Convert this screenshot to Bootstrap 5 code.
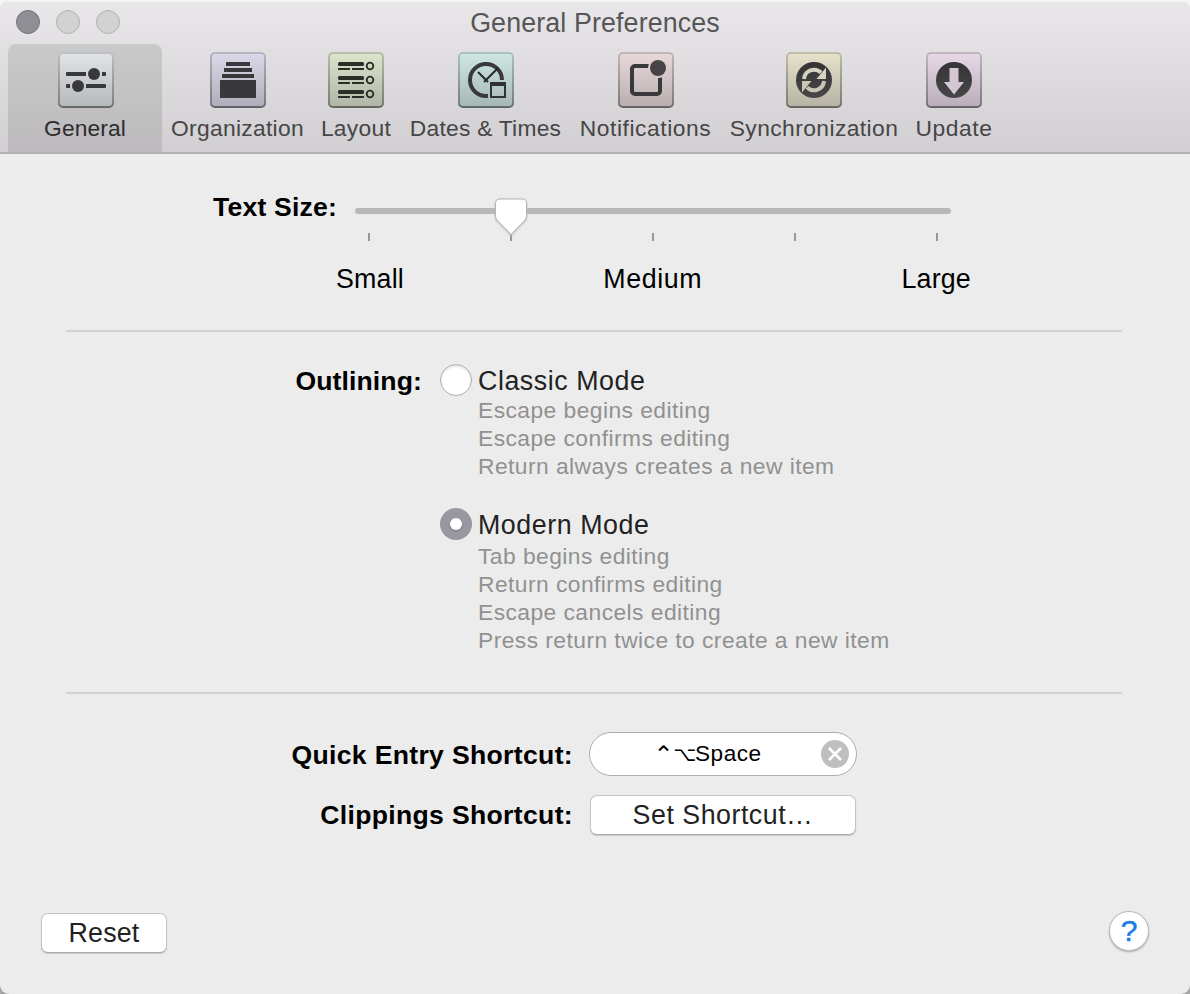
<!DOCTYPE html>
<html lang="en">
<head>
<meta charset="utf-8">
<meta name="viewport" content="width=device-width, initial-scale=1">
<title>General Preferences</title>
<link href="https://cdn.jsdelivr.net/npm/bootstrap@5.3.0/dist/css/bootstrap.min.css" rel="stylesheet">
<style>
html{background:linear-gradient(#f6f6f6 50%,#a5a5a5 50%);height:100%}
body{background:transparent;font-family:"Liberation Sans",Arial,sans-serif;font-size:26.8px;line-height:30px;color:#000;height:994px;overflow:hidden}
.window{height:994px;background:#ececec;border-radius:9px;overflow:hidden}
.titlebar{height:154px;background:linear-gradient(#e9e7e9,#d1cfd1);border-bottom:2px solid #b3b1b3;box-shadow:inset 0 2px 0 #f4f3f4}
.titlerow{height:44px}
.lights{left:16px;top:10px;gap:16px}
.light{width:24px;height:24px;border-radius:50%;background:#d3d2d3;border:1px solid #b5b4b5}
.light.shut{background:#8f8e95;border-color:#737279}
.title-text{color:#565557;letter-spacing:.13px}
.tools{height:108px;padding-left:8px}
.tool{height:108px;padding:8px 0 0;color:#464547;font-size:22.8px;line-height:26px;border:0;background:none}
.tool svg{display:block;margin-bottom:7px}
.tool.active{background:linear-gradient(#cac9ca,#bcbabc);color:#2d2c2f;border-radius:8px 8px 0 0}
.tool.active svg{margin-left:2px}
.w1{width:154px;letter-spacing:.1px}.w2{width:151px;letter-spacing:.3px}.w3{width:86px;letter-spacing:.3px}.w4{width:173px;letter-spacing:.25px}.w5{width:147px;letter-spacing:.55px}.w6{width:190px;letter-spacing:.43px}.w7{width:90px;letter-spacing:.55px}
.ink{fill:#39383b}.inkline{stroke:#39383b;fill:none}
.size-row{height:176px;padding-top:38px}
.lbl{font-weight:700;text-align:right;font-size:26.6px}
.lbl-size{width:337px;letter-spacing:.18px}
.lbl-out{width:422px;letter-spacing:.1px;padding-top:2px}
.lbl-short{width:573px;letter-spacing:.32px;padding-top:2px}
.clip-row .lbl-short{padding-top:0}
.slider{width:596px;margin-left:18px;padding-top:16px}
.track{height:6px;border-radius:3px;background:#b8b8b8}
.knob{left:139px;top:5px;overflow:visible;filter:drop-shadow(0 1px 1px #bbb)}
.ticks{padding:0 13px;margin-top:19px}
.tick{width:2px;height:8px;background:#999}
.size-names{margin:23px -20px 0 -19px;letter-spacing:.2px}
.size-names .mid{letter-spacing:.6px}
.rule{height:2px;margin:0 68px 0 66px;background:#d2d2d2}
.modes{height:360px;padding-top:32px}
.mode-list{margin-left:18px}
.mode-name{color:#222;letter-spacing:.55px;height:32px;line-height:34px;gap:6px}
.second{margin-top:28px;margin-bottom:2px}
.dot{width:32px;height:32px;flex:none;border-radius:50%;background:#fff;border:1px solid #adadad;box-shadow:inset 0 2px 2px #e6e6e6}
.dot.on{background:#9998a0;border:0;box-shadow:none;display:flex;align-items:center;justify-content:center}
.dot.on::after{content:"";width:12px;height:12px;border-radius:50%;background:#fff;box-shadow:0 1px 2px #77767c}
.mode-note{margin-left:38px;color:#919191;font-size:22.8px;line-height:28px;letter-spacing:.45px}
.shortcuts{padding-top:38px}
.recorder{width:268px;height:44px;border:1px solid #adadad;border-radius:22px;background:#fff;margin-left:16px;font-size:22.6px;padding:0 6px 0 63px;letter-spacing:.5px;line-height:42px}
.key{font-family:"DejaVu Sans",sans-serif;letter-spacing:0;display:flex;justify-content:center}
.ctrl{width:21px;font-size:24px;padding-top:2px}
.opt{width:21px;font-size:20px}
.mac-btn{background:#fff;border:1px solid #c4c4c4;border-bottom-color:#adadad;border-radius:7px;box-shadow:0 1px 1px #c6c6c6;color:#222;font-size:26.8px;line-height:36px;padding:1px 0;height:40px}
.clip-row{margin-top:19px}
.set{width:266px;margin-left:17px;letter-spacing:.5px}
.reset{width:126px;letter-spacing:.2px;margin-top:2px}
.foot{padding:76px 41px 0}
.help{width:40px;height:40px;border-radius:50%;background:#fff;border:1px solid #bbb;box-shadow:0 1px 2px #aaa;color:#1a7bea;font-size:30px;line-height:38px;padding:0;-webkit-text-stroke:.5px #1a7bea}
</style>
<script src="https://cdn.jsdelivr.net/npm/bootstrap@5.3.0/dist/js/bootstrap.bundle.min.js"></script>
</head>
<body>
<svg width="0" height="0" class="position-absolute">
<defs>
<linearGradient id="edge" gradientUnits="userSpaceOnUse" x1="0" y1="0" x2="0" y2="56"><stop stop-color="#000" stop-opacity=".16"/><stop offset=".9" stop-color="#000" stop-opacity=".3"/><stop offset="1" stop-color="#000" stop-opacity=".46"/></linearGradient>
<linearGradient id="g1" x2="0" y2="1"><stop stop-color="#e2e6e8"/><stop offset="1" stop-color="#b4b7b8"/></linearGradient>
<linearGradient id="g2" x2="0" y2="1"><stop stop-color="#dcd9ea"/><stop offset="1" stop-color="#aeacb9"/></linearGradient>
<linearGradient id="g3" x2="0" y2="1"><stop stop-color="#dde5cc"/><stop offset="1" stop-color="#afb4a5"/></linearGradient>
<linearGradient id="g4" x2="0" y2="1"><stop stop-color="#cfe8e3"/><stop offset="1" stop-color="#a5b6b3"/></linearGradient>
<linearGradient id="g5" x2="0" y2="1"><stop stop-color="#ead9db"/><stop offset="1" stop-color="#b7adae"/></linearGradient>
<linearGradient id="g6" x2="0" y2="1"><stop stop-color="#e7e2cb"/><stop offset="1" stop-color="#b5b2a4"/></linearGradient>
<linearGradient id="g7" x2="0" y2="1"><stop stop-color="#e9d9e8"/><stop offset="1" stop-color="#b7adb8"/></linearGradient>
<linearGradient id="dark" x2="0" y2="1"><stop stop-color="#343336"/><stop offset="1" stop-color="#474649"/></linearGradient>
<mask id="calgap"><path fill="#fff" d="M0 0h56v56H0z"/><path d="M30 28h22v22H30z"/></mask>
<mask id="dotgap"><path fill="#fff" d="M0 0h56v56H0z"/><circle cx="40" cy="16" r="10"/></mask>
</defs>
</svg>
<div class="window">
<header class="titlebar">
<div class="titlerow position-relative d-flex justify-content-center">
<div class="lights position-absolute d-flex"><span class="light shut"></span><span class="light"></span><span class="light"></span></div>
<div class="title-text pt-2">General Preferences</div>
</div>
<nav class="tools d-flex">
<button class="tool active w1 d-flex flex-column align-items-center"><svg width="56" height="56"><rect width="56" height="56" rx="5" fill="url(#g1)"/><rect x="1" y="1" width="54" height="54" rx="4" fill="none" stroke="url(#edge)" stroke-width="2"/><path class="inkline" stroke-width="4" d="M9 22h19M44 22h3M9 34h3M28 34h19"/><path class="inkline" stroke-width="2" stroke-linecap="round" d="M9 21v2M47 21v2M9 33v2M47 33v2"/><circle class="ink" cx="36" cy="22" r="6"/><circle class="ink" cx="20" cy="34" r="6"/></svg>General</button>
<button class="tool w2 d-flex flex-column align-items-center"><svg width="56" height="56"><rect width="56" height="56" rx="5" fill="url(#g2)"/><rect x="1" y="1" width="54" height="54" rx="4" fill="none" stroke="url(#edge)" stroke-width="2"/><path class="ink" d="M16 10h24v4H16zM14 16h28v4H14zM12 22h32v4H12zM10 28h36v18H10z"/></svg>Organization</button>
<button class="tool w3 d-flex flex-column align-items-center"><svg width="56" height="56"><rect width="56" height="56" rx="5" fill="url(#g3)"/><rect x="1" y="1" width="54" height="54" rx="4" fill="none" stroke="url(#edge)" stroke-width="2"/><g fill="#2b2d28"><rect x="10" y="10" width="26" height="4" rx="1.5"/><rect x="10" y="24" width="26" height="4" rx="1.5"/><rect x="10" y="38" width="26" height="4" rx="1.5"/><path d="M10 16h12v2H10zM24 16h12v2H24zM10 30h12v2H10zM24 30h12v2H24zM10 44h12v2H10zM24 44h12v2H24z"/></g><g fill="none" stroke="#2b2d28" stroke-width="1.8"><circle cx="42" cy="14" r="3.3"/><circle cx="42" cy="28" r="3.3"/><circle cx="42" cy="42" r="3.3"/></g></svg>Layout</button>
<button class="tool w4 d-flex flex-column align-items-center"><svg width="56" height="56"><rect width="56" height="56" rx="5" fill="url(#g4)"/><rect x="1" y="1" width="54" height="54" rx="4" fill="none" stroke="url(#edge)" stroke-width="2"/><g mask="url(#calgap)"><circle class="inkline" cx="28" cy="28" r="16" stroke-width="4"/></g><path fill="none" stroke="#27292b" stroke-width="2" d="M20 20l10 10M26 30l14-14"/><path fill="#303335" fill-rule="evenodd" d="M32 30h16v16H32zM34 34v10h12V34z"/></svg>Dates &amp; Times</button>
<button class="tool w5 d-flex flex-column align-items-center"><svg width="56" height="56"><rect width="56" height="56" rx="5" fill="url(#g5)"/><rect x="1" y="1" width="54" height="54" rx="4" fill="none" stroke="url(#edge)" stroke-width="2"/><rect mask="url(#dotgap)" class="inkline" x="14" y="14" width="28" height="28" rx="3" stroke-width="4"/><circle cx="40" cy="16" r="8" fill="#454345"/></svg>Notifications</button>
<button class="tool w6 d-flex flex-column align-items-center"><svg width="56" height="56"><rect width="56" height="56" rx="5" fill="url(#g6)"/><rect x="1" y="1" width="54" height="54" rx="4" fill="none" stroke="url(#edge)" stroke-width="2"/><circle cx="28" cy="28" r="18" fill="url(#dark)"/><path fill="none" stroke="#d6d2c0" stroke-width="4" d="M18 27a10 10 0 0 1 17-6.3"/><path fill="#d6d2c0" d="M40 15.500v11.500H30.500z"/><g transform="rotate(180 28 28)"><path fill="none" stroke="#c8c5b5" stroke-width="4" d="M18 27a10 10 0 0 1 17-6.3"/><path fill="#c8c5b5" d="M40 15.500v11.500H30.500z"/></g></svg>Synchronization</button>
<button class="tool w7 d-flex flex-column align-items-center"><svg width="56" height="56"><rect width="56" height="56" rx="5" fill="url(#g7)"/><rect x="1" y="1" width="54" height="54" rx="4" fill="none" stroke="url(#edge)" stroke-width="2"/><circle cx="28" cy="28" r="18" fill="url(#dark)"/><path fill="#d3c7d3" d="M23.5 16h9v14H38L28 42.5 18 30h5.500z"/></svg>Update</button>
</nav>
</header>
<main>
<section class="size-row d-flex">
<div class="lbl lbl-size">Text Size:</div>
<div class="slider position-relative">
<div class="track"></div>
<svg class="knob position-absolute" width="34" height="42"><path d="M6 2h22q4.500 0 4.500 4.500V19q0 2-1.500 4L17 37.500 3 23q-1.500-2-1.500-4V6.500Q1.500 2 6 2z" fill="#fff" stroke="#b4b4b4"/></svg>
<div class="ticks d-flex justify-content-between"><span class="tick"></span><span class="tick"></span><span class="tick"></span><span class="tick"></span><span class="tick"></span></div>
<div class="size-names d-flex justify-content-between"><span>Small</span><span class="mid">Medium</span><span>Large</span></div>
</div>
</section>
<div class="rule"></div>
<section class="modes d-flex">
<div class="lbl lbl-out">Outlining:</div>
<div class="mode-list">
<div class="mode-name d-flex"><span class="dot"></span>Classic Mode</div>
<div class="mode-note">Escape begins editing<br>Escape confirms editing<br>Return always creates a new item</div>
<div class="mode-name second d-flex"><span class="dot on"></span>Modern Mode</div>
<div class="mode-note">Tab begins editing<br>Return confirms editing<br>Escape cancels editing<br>Press return twice to create a new item</div>
</div>
</section>
<div class="rule"></div>
<section class="shortcuts">
<div class="d-flex align-items-center"><div class="lbl lbl-short">Quick Entry Shortcut:</div><div class="recorder d-flex align-items-center"><span class="key ctrl">⌃</span><span class="key opt">⌥</span><span>Space</span><svg class="ms-auto" width="30" height="30"><circle cx="15" cy="15" r="14" fill="#bfbfbf"/><path d="M9 9l12 12M21 9L9 21" stroke="#fff" stroke-width="2.600"/></svg></div></div>
<div class="clip-row d-flex align-items-center"><div class="lbl lbl-short">Clippings Shortcut:</div><button class="mac-btn set">Set Shortcut…</button></div>
</section>
<footer class="foot d-flex justify-content-between"><button class="mac-btn reset">Reset</button><button class="help">?</button></footer>
</main>
</div>
</body>
</html>
